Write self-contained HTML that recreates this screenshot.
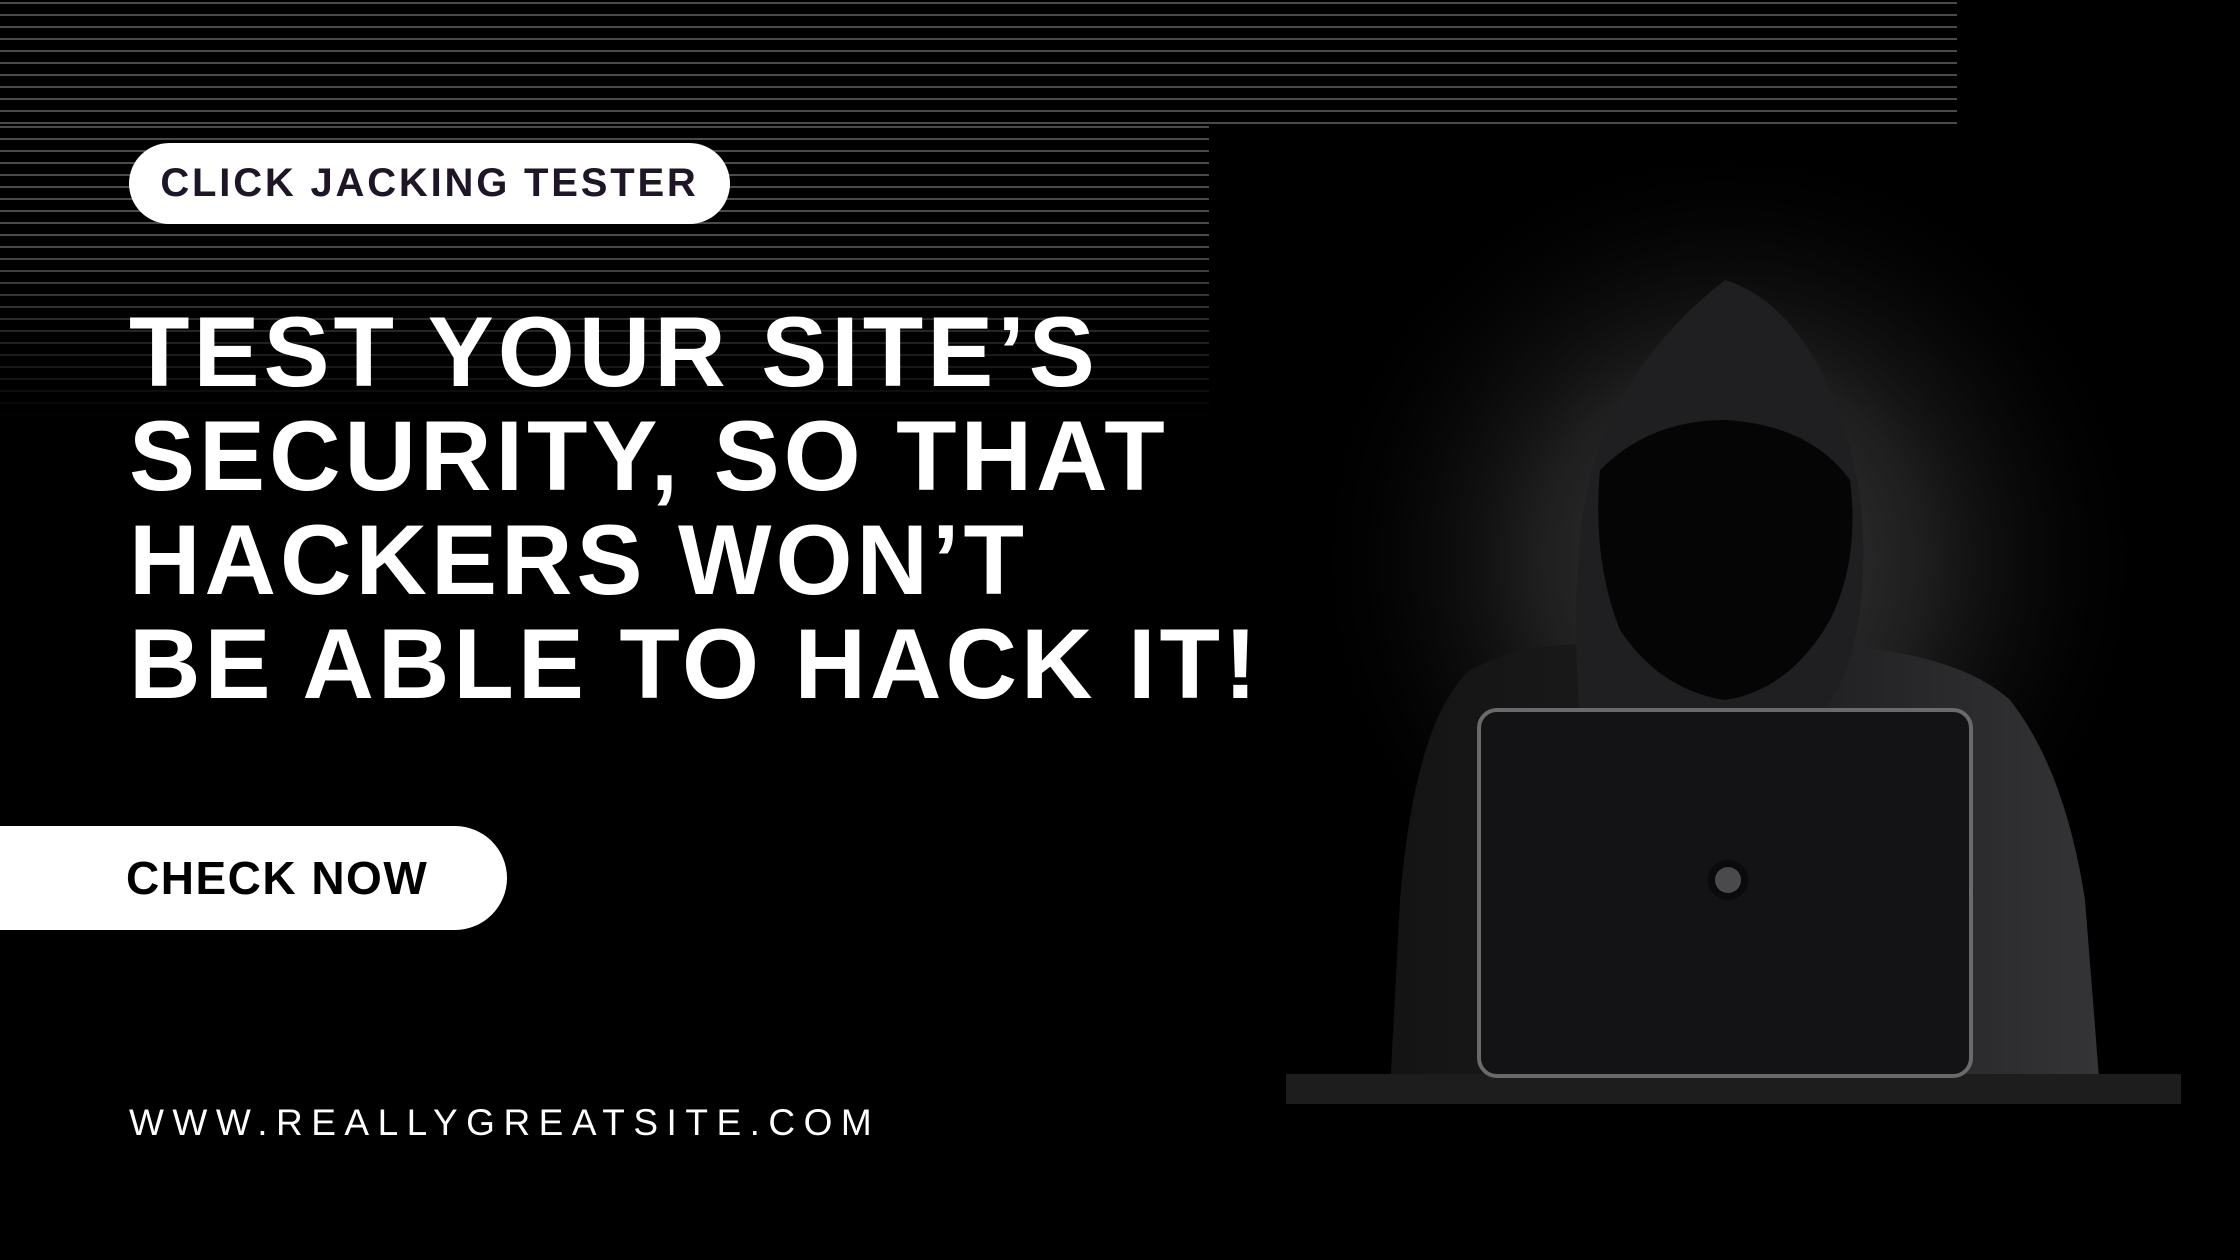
<!DOCTYPE html>
<html><head><meta charset="utf-8"><style>
html,body{margin:0;padding:0;background:#000;}
body{width:2240px;height:1260px;position:relative;overflow:hidden;font-family:"Liberation Sans",Arial,sans-serif;}
.stripes{position:absolute;background:repeating-linear-gradient(to bottom,transparent 0,transparent 2px,#4a4a4a 2px,#4a4a4a 4px,transparent 4px,transparent 12px);}
.s1{left:0;top:0;width:1957px;height:124px;}
.s2{left:0;top:124px;width:1209px;height:300px;-webkit-mask-image:linear-gradient(to bottom,#000 0%,#000 40%,transparent 100%);mask-image:linear-gradient(to bottom,#000 0%,#000 40%,transparent 100%);}
.pill{position:absolute;left:129px;top:143px;width:601px;height:81px;background:#fff;border-radius:41px;color:#1e1527;font-weight:bold;font-size:40px;line-height:81px;text-align:center;letter-spacing:2.8px;}
.h{position:absolute;left:129px;top:300px;color:#fff;font-weight:bold;font-size:99px;line-height:104px;letter-spacing:4px;white-space:nowrap;}
.btn{position:absolute;left:0;top:826px;width:507px;height:104px;background:#fff;border-radius:0 52px 52px 0;}
.btn span{position:absolute;left:126px;top:0;line-height:104px;font-weight:bold;font-size:46px;color:#000;letter-spacing:1.5px;}
.url{position:absolute;left:129px;top:1102px;color:#fff;font-size:37px;letter-spacing:8.5px;white-space:nowrap;}
svg{position:absolute;left:0;top:0;}
</style></head><body>
<div class="stripes s1"></div>
<div class="stripes s2"></div>
<svg width="2240" height="1260" viewBox="0 0 2240 1260">
<defs>
<radialGradient id="g" cx="1729" cy="560" r="430" gradientUnits="userSpaceOnUse">
<stop offset="0" stop-color="#3a3a3a"/><stop offset="0.45" stop-color="#1e1e1e"/><stop offset="1" stop-color="#000" stop-opacity="0"/></radialGradient>
<linearGradient id="b" x1="0" x2="1" y1="0" y2="0"><stop offset="0" stop-color="#141414"/><stop offset="0.5" stop-color="#1c1c1e"/><stop offset="1" stop-color="#343437"/></linearGradient>
</defs>
<rect x="1240" y="130" width="990" height="1000" fill="url(#g)"/>
<!-- body -->
<path d="M1390 1090 L1400 900 Q1415 720 1470 670 Q1530 640 1600 645 L1840 645 Q1960 655 2010 700 Q2065 770 2085 900 L2100 1090 Z" fill="url(#b)"/>
<!-- hood -->
<path d="M1580 720 Q1570 600 1585 500 Q1610 370 1725 280 Q1790 300 1830 390 Q1870 480 1862 590 Q1855 680 1815 720 Z" fill="#1f1f21"/>
<path d="M1600 470 Q1650 420 1725 420 Q1810 425 1850 480 Q1860 560 1830 620 Q1790 690 1725 700 Q1660 690 1620 630 Q1592 560 1600 470 Z" fill="#050505"/>
<!-- desk -->
<rect x="1286" y="1074" width="895" height="30" fill="#1d1d1d"/>
<!-- laptop -->
<rect x="1479" y="710" width="492" height="366" rx="18" fill="#131315" stroke="#6a6a6a" stroke-width="4"/>
<circle cx="1728" cy="880" r="20" fill="#0a0a0a"/>
<circle cx="1728" cy="880" r="13" fill="#4a4a4c"/>
</svg>
<div class="pill">CLICK JACKING TESTER</div>
<div class="h">TEST YOUR SITE’S<br>SECURITY, SO THAT<br>HACKERS WON’T<br>BE ABLE TO HACK IT!</div>
<div class="btn"><span>CHECK NOW</span></div>
<div class="url">WWW.REALLYGREATSITE.COM</div>
</body></html>
